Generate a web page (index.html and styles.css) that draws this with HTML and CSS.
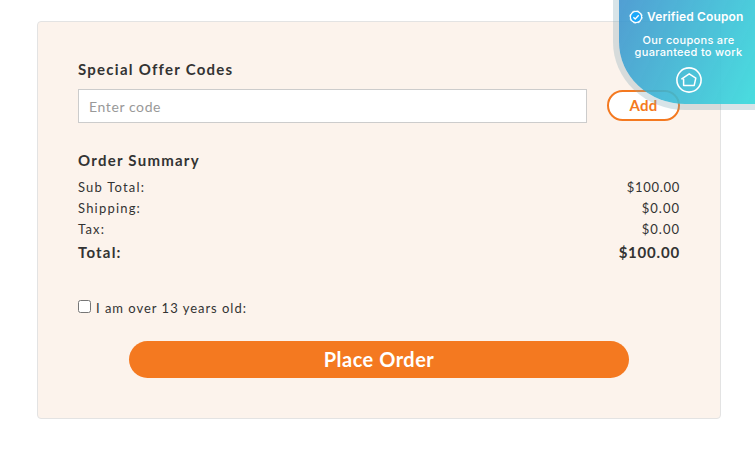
FILE: index.html
```html
<!DOCTYPE html>
<html lang="en">
<head>
	<meta charset="utf-8">
	<meta name="viewport" content="width=device-width">
	<title>Order</title>
	<link rel="stylesheet" href="styles.css">
</head>
<body>
	<main class="card">
		<h2 class="title">Special Offer Codes</h2>
		<div class="offer">
			<input class="code" type="text" placeholder="Enter code">
			<button class="add">Add</button>
		</div>
		<h2 class="title summary">Order Summary</h2>
		<div class="row"><span>Sub Total:</span><span class="price">$100.00</span></div>
		<div class="row"><span>Shipping:</span><span class="price short">$0.00</span></div>
		<div class="row"><span>Tax:</span><span class="price short">$0.00</span></div>
		<div class="row total"><span>Total:</span><span class="price">$100.00</span></div>
		<label class="age">
			<input class="check" type="checkbox">
			<span>I am over 13 years old:</span>
		</label>
		<button class="place">Place Order</button>
	</main>
	<aside class="coupon">
		<div class="verified">
			<svg width="14" height="14" viewBox="0 0 14 14">
				<circle cx="7" cy="7" r="5.6" fill="#1ca8fa" stroke="#fff" stroke-width="1.2"/>
				<circle cx="7" cy="7" r="6.2" fill="none" stroke="#fff" stroke-width="0.8" stroke-dasharray="2.6 2.27"/>
				<path d="M4.4 7.2l1.8 1.8 3.5-3.8" fill="none" stroke="#fff" stroke-width="1.3"/>
			</svg>
			<span>Verified Coupon</span>
		</div>
		<div class="promise"><div>Our coupons are</div><div>guaranteed to work</div></div>
		<svg class="logo" width="26" height="26" viewBox="0 0 26 26" fill="none" stroke="#fff">
			<circle cx="13" cy="13" r="12.1" stroke-width="1.6"/>
			<path d="M7.6 11.8V18.4H18.2L19.8 11.2 13.2 6.8 5.8 11.8H7.6" stroke-width="1.5" stroke-linejoin="round"/>
		</svg>
	</aside>
</body>
</html>
```
FILE: styles.css
```css
*{box-sizing:border-box;}
body{
	margin:0;
	height:453px;
	overflow:hidden;
	background-color:#fff;
	color:#333;
	font-family:Lato, "Open Sans", sans-serif;
}
.card{
	width:684px;
	height:398px;
	margin:21px 0 0 37px;
	padding:38px 40px;
	border:1px solid #e3e3e3;
	border-radius:4px;
	background-color:#fcf3ec;
	display:flow-root;
}
.title{
	margin:0;
	font-size:15px;
	line-height:19px;
	letter-spacing:1.25px;
}
.offer{
	display:flex;
	align-items:center;
	justify-content:space-between;
	height:34px;
	margin-top:10px;
}
.code{
	width:509px;
	height:34px;
	padding:0 10px;
	border:1px solid #ccc;
	border-radius:0;
	font:14px Lato, sans-serif;
	letter-spacing:0.6px;
}
.code::placeholder{color:#999;}
.add{
	width:73px;
	height:31px;
	margin-top:-1px;
	padding:0 0 1px;
	border:2px solid #f47920;
	border-radius:16px;
	background-color:#fff;
	color:#f47920;
	font:bold 15px Lato, sans-serif;
	letter-spacing:0.3px;
}
.summary{
	margin-top:28px;
	margin-bottom:7px;
}
.row{
	display:flex;
	justify-content:space-between;
	font-size:13px;
	line-height:21px;
	letter-spacing:1.2px;
}
.price{letter-spacing:0.7px;}
.short{letter-spacing:1px;}
.total{
	font-size:15px;
	font-weight:bold;
	line-height:25px;
}
.total .price{letter-spacing:0.8px;}
.age{
	display:flex;
	align-items:center;
	margin-top:32px;
	height:21px;
	font-size:13px;
	letter-spacing:0.98px;
}
.check{
	width:13px;
	height:13px;
	margin:0 5px 3px 0;
}
.place{
	display:block;
	width:500px;
	height:37px;
	margin:23px auto 0;
	padding:0 0 2px;
	border:0;
	border-radius:19px;
	background-color:#f47920;
	color:#fff;
	font:bold 20px Lato, sans-serif;
	letter-spacing:0.5px;
}
/* sits over the top right corner of the page */
.coupon{
	position:absolute;
	top:0;
	right:0;
	width:142px;
	height:110px;
	padding:10px 3px 0 6px;
	border:solid rgba(125,165,180,0.3);
	border-width:0 0 6px 6px;
	border-bottom-left-radius:72px 68px;
	background:linear-gradient(115deg, rgba(57,145,205,0.88), rgba(58,218,220,0.92)) padding-box;
	color:#fff;
	font-family:Inter, sans-serif;
	text-align:center;
}
.verified{
	display:flex;
	align-items:center;
	gap:4px;
	margin-left:4px;
	height:13px;
	font-size:12px;
	font-weight:600;
	letter-spacing:0.15px;
	white-space:nowrap;
}
.promise{
	margin-top:11px;
	font-size:11px;
	font-weight:500;
	line-height:12px;
	letter-spacing:0.3px;
	white-space:nowrap;
}
.logo{
	display:block;
	margin:9px auto 0;
}
```
